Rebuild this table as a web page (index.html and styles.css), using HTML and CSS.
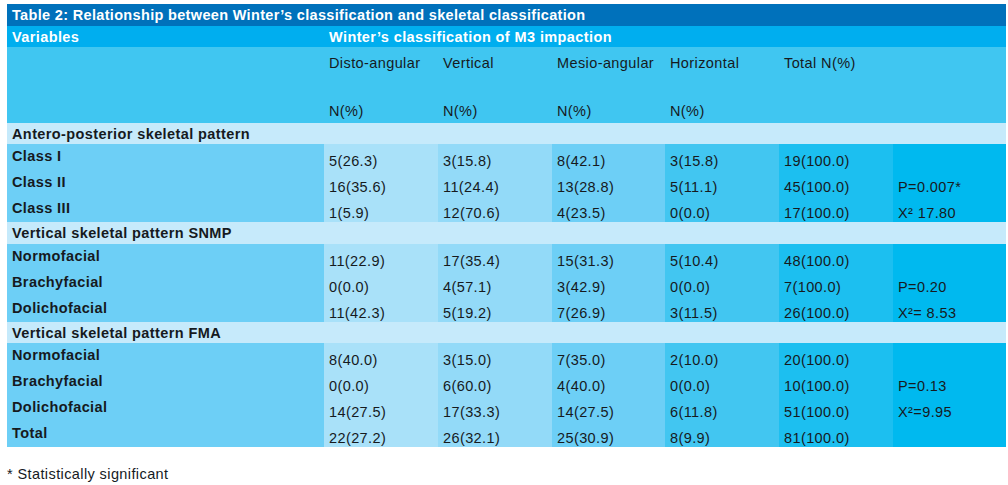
FILE: index.html
```html
<!DOCTYPE html>
<html lang="en">
<head>
<meta charset="utf-8">
<title>Table 2</title>
<link rel="stylesheet" href="styles.css">
</head>
<body>
<table class="tbl">
  <colgroup>
    <col class="c-lab">
    <col class="c-2">
    <col class="c-3">
    <col class="c-4">
    <col class="c-5">
    <col class="c-6">
    <col class="c-7">
  </colgroup>
  <tr class="r-title"><td colspan="7">Table 2: Relationship between Winter’s classification and skeletal classification</td></tr>
  <tr class="r-var"><td>Variables</td><td colspan="6">Winter’s classification of M3 impaction</td></tr>
  <tr class="r-sub">
    <td></td>
    <td>Disto-angular<br><br><br>N(%)</td>
    <td>Vertical<br><br><br>N(%)</td>
    <td>Mesio-angular<br><br><br>N(%)</td>
    <td>Horizontal<br><br><br>N(%)</td>
    <td>Total N(%)</td>
    <td></td>
  </tr>
  <tr class="r-sec"><td colspan="7">Antero-posterior skeletal pattern</td></tr>
  <tr class="r-d"><th>Class I</th><td>5(26.3)</td><td>3(15.8)</td><td>8(42.1)</td><td>3(15.8)</td><td>19(100.0)</td><td></td></tr>
  <tr class="r-d"><th>Class II</th><td>16(35.6)</td><td>11(24.4)</td><td>13(28.8)</td><td>5(11.1)</td><td>45(100.0)</td><td>P=0.007*</td></tr>
  <tr class="r-d"><th>Class III</th><td>1(5.9)</td><td>12(70.6)</td><td>4(23.5)</td><td>0(0.0)</td><td>17(100.0)</td><td>X² 17.80</td></tr>
  <tr class="r-sec r-sec2"><td colspan="7">Vertical skeletal pattern SNMP</td></tr>
  <tr class="r-d"><th>Normofacial</th><td>11(22.9)</td><td>17(35.4)</td><td>15(31.3)</td><td>5(10.4)</td><td>48(100.0)</td><td></td></tr>
  <tr class="r-d"><th>Brachyfacial</th><td>0(0.0)</td><td>4(57.1)</td><td>3(42.9)</td><td>0(0.0)</td><td>7(100.0)</td><td>P=0.20</td></tr>
  <tr class="r-d"><th>Dolichofacial</th><td>11(42.3)</td><td>5(19.2)</td><td>7(26.9)</td><td>3(11.5)</td><td>26(100.0)</td><td>X²= 8.53</td></tr>
  <tr class="r-sec"><td colspan="7">Vertical skeletal pattern FMA</td></tr>
  <tr class="r-d"><th>Normofacial</th><td>8(40.0)</td><td>3(15.0)</td><td>7(35.0)</td><td>2(10.0)</td><td>20(100.0)</td><td></td></tr>
  <tr class="r-d"><th>Brachyfacial</th><td>0(0.0)</td><td>6(60.0)</td><td>4(40.0)</td><td>0(0.0)</td><td>10(100.0)</td><td>P=0.13</td></tr>
  <tr class="r-d"><th>Dolichofacial</th><td>14(27.5)</td><td>17(33.3)</td><td>14(27.5)</td><td>6(11.8)</td><td>51(100.0)</td><td>X²=9.95</td></tr>
  <tr class="r-d"><th>Total</th><td>22(27.2)</td><td>26(32.1)</td><td>25(30.9)</td><td>8(9.9)</td><td>81(100.0)</td><td></td></tr>
</table>
<p class="note">* Statistically significant</p>
</body>
</html>
```
FILE: styles.css
```css
html, body {
  margin: 0;
  padding: 0;
  background: #ffffff;
}
body {
  padding: 4px 2px 0 7px;
  font-family: "Liberation Sans", Arial, sans-serif;
  font-size: 14.5px;
  letter-spacing: 0.4px;
  line-height: 16px;
  color: #161a1e;
}
.tbl {
  border-collapse: collapse;
  border-spacing: 0;
  table-layout: fixed;
  width: 999px;
}
.tbl td, .tbl th {
  padding: 0 5px;
  text-align: left;
  white-space: nowrap;
  overflow: hidden;
}
.c-lab { width: 317px; background: #6dcff6; }
.c-2 { width: 114px; background: #a9e1f9; }
.c-3 { width: 114px; background: #93daf8; }
.c-4 { width: 113px; background: #6dcff6; }
.c-5 { width: 114px; background: #42c6f1; }
.c-6 { width: 114px; background: #1cbff0; }
.c-7 { width: 113px; background: #00b9ef; }

.r-title { background: #0071bb; }
.r-title td {
  height: 22px;
  color: #ffffff;
  font-weight: bold;
  letter-spacing: 0.33px;
  vertical-align: middle;
}
.r-var { background: #00aeef; }
.r-var td {
  height: 21px;
  color: #ffffff;
  font-weight: bold;
  vertical-align: middle;
}
.r-sub { background: #40c6f1; }
.r-sub td {
  height: 76px;
  box-sizing: border-box;
  padding-top: 8px;
  vertical-align: top;
}
.r-sec { background: #c6eafb; }
.r-sec td {
  height: 21px;
  font-weight: bold;
  vertical-align: middle;
}
.r-sec2 td { height: 22px; }
.r-d th, .r-d td {
  height: 26px;
  box-sizing: border-box;
  vertical-align: top;
}
.r-d th {
  font-weight: bold;
  padding-top: 4px;
}
.r-d td {
  padding-top: 9px;
}
.note {
  margin: 19px 0 0 0;
}
```
